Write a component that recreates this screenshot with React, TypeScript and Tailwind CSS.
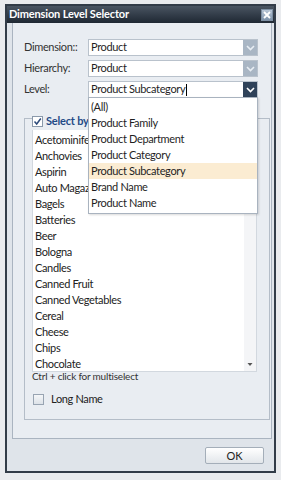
import React from "react";

const items = [
  "Acetominifen",
  "Anchovies",
  "Aspirin",
  "Auto Magazines",
  "Bagels",
  "Batteries",
  "Beer",
  "Bologna",
  "Candles",
  "Canned Fruit",
  "Canned Vegetables",
  "Cereal",
  "Cheese",
  "Chips",
  "Chocolate",
];

const levels = [
  "(All)",
  "Product Family",
  "Product Department",
  "Product Category",
  "Product Subcategory",
  "Brand Name",
  "Product Name",
];

function Chevron({ color = "#ffffff" }: { color?: string }) {
  return (
    <svg width="9" height="6" viewBox="0 0 9 6">
      <path d="M1 1 L4.5 4.5 L8 1" fill="none" stroke={color} strokeWidth="1.6" />
    </svg>
  );
}

function Combo({ value, active = false, caret = false }: { value: string; active?: boolean; caret?: boolean }) {
  return (
    <div className="flex h-[17px] w-[170px] border border-[#b9c2cc] bg-white">
      <div className="flex flex-1 items-center pl-[2px] text-[11px] tracking-[-0.35px] text-[#1f1f1f]">
        {value}
        {caret && <span className="ml-[1px] inline-block h-[12px] w-[1px] bg-black" />}
      </div>
      <div
        className={
          active
            ? "flex w-[14px] items-center justify-center bg-[#2f4259]"
            : "flex w-[14px] items-center justify-center bg-[#a9b6c4]"
        }
      >
        <Chevron color={active ? "#ffffff" : "#e8eef4"} />
      </div>
    </div>
  );
}

export default function App() {
  return (
    <div
      className="relative h-[480px] w-[281px] bg-[#e9ebee] pl-[5px] pt-[4px]"
      style={{ fontFamily: 'Lato, "Liberation Sans", Arial, sans-serif' }}
    >
      <div className="flex h-[469px] w-[271px] flex-col border-2 border-[#323c48] bg-[#dfe4ea]">
        {/* title bar */}
        <div className="flex h-[17px] items-center justify-between bg-gradient-to-b from-[#4a5562] to-[#1f2833] pl-[2px] pr-[1px]">
          <span className="text-[11px] font-bold tracking-[-0.15px] text-white">Dimension Level Selector</span>
          <div className="flex h-[12px] w-[12px] items-center justify-center border border-[#7d8fa3] bg-gradient-to-b from-[#b8c6d6] to-[#7e93aa]">
            <svg width="8" height="8" viewBox="0 0 8 8">
              <path d="M1 1 L7 7 M7 1 L1 7" stroke="#ffffff" strokeWidth="1.8" />
            </svg>
          </div>
        </div>
        {/* body */}
        <div className="flex flex-1 flex-col">
          <div className="relative ml-[5px] mr-[2px] h-[416px] border-x border-b border-[#aab4c0] bg-[#e9edf2] pl-[11px] pt-[16px]">
            <div className="flex flex-col gap-[4px]">
              <div className="flex items-center">
                <span className="w-[64px] text-[11px] tracking-[-0.35px] text-[#333]">Dimension::</span>
                <Combo value="Product" />
              </div>
              <div className="flex items-center">
                <span className="w-[64px] text-[11px] tracking-[-0.35px] text-[#333]">Hierarchy:</span>
                <Combo value="Product" />
              </div>
              <div className="flex items-center">
                <span className="w-[64px] text-[11px] tracking-[-0.35px] text-[#333]">Level:</span>
                <Combo value="Product Subcategory" active caret />
              </div>
            </div>

            {/* group box */}
            <div className="relative mt-[20px] h-[302px] w-[246px] border border-[#b4bdc8] pl-[7px] pt-[9px]">
              <div className="absolute left-[7px] top-[-6px] flex items-center gap-[3px] bg-[#e9edf2] pr-[2px]">
                <div className="flex h-[11px] w-[11px] items-center justify-center border border-[#8a99ab] bg-white">
                  <svg width="9" height="9" viewBox="0 0 9 9">
                    <path d="M1.5 4.5 L3.7 7 L7.8 1.5" fill="none" stroke="#2c4a7a" strokeWidth="1.5" />
                  </svg>
                </div>
                <span className="text-[11px] font-bold tracking-[-0.2px] text-[#1f4a86]">Select by</span>
              </div>
              <div className="flex h-[244px] w-[225px] border border-[#d2d8df] bg-white">
                <div className="flex flex-1 flex-col pl-[2px] pt-[3px]">
                  {items.map((it) => (
                    <div key={it} className="flex h-[16px] items-center whitespace-nowrap text-[11px] tracking-[-0.35px] text-[#222]">
                      {it}
                    </div>
                  ))}
                </div>
                <div className="flex w-[12px] flex-col justify-end bg-[#f4f5f7] pb-[4px]">
                  <svg width="12" height="5" viewBox="0 0 12 5">
                    <path d="M3.5 1 L8.5 1 L6 4 Z" fill="#555" />
                  </svg>
                </div>
              </div>
              <div className="-mt-[1px] text-[10px] leading-[11px] tracking-[-0.2px] text-[#333]">Ctrl + click for multiselect</div>
              <div className="mt-[9px] flex items-center gap-[7px] pl-[1px]">
                <div className="h-[11px] w-[11px] border border-[#98a4b2] bg-gradient-to-b from-[#f4f6f8] to-[#dde2e8]" />
                <span className="text-[11px] tracking-[-0.35px] text-[#222]">Long Name</span>
              </div>
            </div>

            {/* dropdown list overlay */}
            <div className="absolute left-[75px] top-[74px] w-[170px] border border-[#a9b3bf] bg-white pb-[2px] pt-[1px] shadow-[1px_1px_2px_rgba(0,0,0,0.15)]">
              {levels.map((l) => (
                <div
                  key={l}
                  className={
                    l === "Product Subcategory"
                      ? "flex h-[16px] items-center bg-[#fbecd2] pl-[2px] text-[11px] tracking-[-0.35px] text-[#1f1f1f]"
                      : "flex h-[16px] items-center pl-[2px] text-[11px] tracking-[-0.35px] text-[#1f1f1f]"
                  }
                >
                  {l}
                </div>
              ))}
            </div>
          </div>
          <div className="flex flex-1 items-center justify-end pr-[10px]">
            <button className="mt-[1px] h-[17px] w-[59px] rounded-[2px] border border-[#a4aeb9] bg-gradient-to-b from-[#ffffff] to-[#e2e6ea] text-[11px] text-[#222]">
              OK
            </button>
          </div>
        </div>
      </div>
    </div>
  );
}
